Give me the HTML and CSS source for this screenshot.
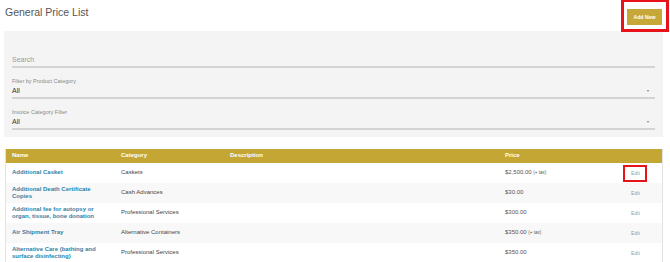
FILE: index.html
```html
<!DOCTYPE html>
<html>
<head>
<meta charset="utf-8">
<link rel="stylesheet" href="styles.css">
</head>
<body>
<div class="top">
  <h1 class="title">General Price List</h1>
  <button class="add-btn">Add New</button>
</div>
<div class="panel">
  <div class="field">
    <div class="label"></div>
    <div class="value placeholder">Search</div>
  </div>
  <div class="field">
    <div class="label">Filter by Product Category</div>
    <div class="value">All<span class="caret"></span></div>
  </div>
  <div class="field">
    <div class="label">Invoice Category Filter</div>
    <div class="value">All<span class="caret"></span></div>
  </div>
</div>
<div class="table">
  <div class="row head">
    <div class="c">Name</div>
    <div class="c">Category</div>
    <div class="c">Description</div>
    <div class="c">Price</div>
    <div class="c"></div>
  </div>
  <div class="row">
    <div class="c name">Additional Casket</div>
    <div class="c cat">Caskets</div>
    <div class="c"></div>
    <div class="c price">$2,500.00 <span class="tax">(+ tax)</span></div>
    <div class="c edit"><span class="flag">Edit</span></div>
  </div>
  <div class="row alt">
    <div class="c name">Additional Death Certificate Copies</div>
    <div class="c cat">Cash Advances</div>
    <div class="c"></div>
    <div class="c price">$30.00</div>
    <div class="c edit"><span>Edit</span></div>
  </div>
  <div class="row">
    <div class="c name">Additional fee for autopsy or organ, tissue, bone donation</div>
    <div class="c cat">Professional Services</div>
    <div class="c"></div>
    <div class="c price">$300.00</div>
    <div class="c edit"><span>Edit</span></div>
  </div>
  <div class="row alt">
    <div class="c name">Air Shipment Tray</div>
    <div class="c cat">Alternative Containers</div>
    <div class="c"></div>
    <div class="c price">$350.00 <span class="tax">(+ tax)</span></div>
    <div class="c edit"><span>Edit</span></div>
  </div>
  <div class="row">
    <div class="c name">Alternative Care (bathing and surface disinfecting)</div>
    <div class="c cat">Professional Services</div>
    <div class="c"></div>
    <div class="c price">$350.00</div>
    <div class="c edit"><span>Edit</span></div>
  </div>
</div>
</body>
</html>
```
FILE: styles.css
```css
html, body {
  margin: 0;
  padding: 0;
  background: #ffffff;
  font-family: "Liberation Sans", Arial, sans-serif;
  overflow: hidden;
}

.top {
  height: 31px;
  display: flex;
  justify-content: space-between;
  align-items: flex-start;
  padding: 0 8px 0 5px;
}

.title {
  margin: 0;
  padding-top: 6px;
  font-size: 10.5px;
  line-height: 13px;
  font-weight: normal;
  color: #555555;
}

.add-btn {
  position: relative;
  margin-top: 9px;
  width: 35px;
  height: 16px;
  padding: 0;
  border: none;
  background: #c6a737;
  color: #ffffff;
  font-family: "Liberation Sans", Arial, sans-serif;
  font-weight: bold;
  font-size: 5.2px;
  line-height: 16px;
  text-align: center;
}

.add-btn::after {
  content: "";
  position: absolute;
  top: -10px;
  bottom: -7px;
  left: -6px;
  right: -7px;
  border: 3px solid #e8121b;
}

.panel {
  margin: 0 7px 0 4px;
  background: #f4f4f4;
  padding: 15px 8px 7px 8px;
  display: flex;
  flex-direction: column;
  gap: 9px;
}

.field {
  display: flex;
  flex-direction: column;
  border-bottom: 2px solid #d3d3d3;
}

.label {
  height: 8px;
  font-size: 5.5px;
  line-height: 8px;
  color: #888888;
}

.value {
  position: relative;
  height: 12px;
  font-size: 7px;
  line-height: 12px;
  color: #333333;
}

.value.placeholder {
  color: #9a9a9a;
}

.caret {
  position: absolute;
  right: 6px;
  top: 5px;
  width: 0;
  height: 0;
  border-left: 1.5px solid transparent;
  border-right: 1.5px solid transparent;
  border-top: 2px solid #777777;
}

.table {
  margin: 12px 7px 0 5px;
  border: 1px solid #e2e2e2;
  border-top: none;
}

.row {
  display: grid;
  grid-template-columns: 109px 109px 275px 125px 1fr;
  height: 20px;
  align-items: center;
}

.row.head {
  height: 14px;
  background: #c4a634;
}

.row.alt {
  background: #f8f8f8;
}

.c {
  padding-left: 6px;
  font-size: 6px;
  line-height: 7.5px;
}

.head .c {
  color: #ffffff;
  font-weight: bold;
  font-size: 6px;
}

.name {
  color: #2f82a9;
  font-weight: bold;
  padding-right: 4px;
}

.cat {
  color: #444444;
}

.price {
  color: #555555;
}

.tax {
  font-size: 4.5px;
}

.edit {
  padding-left: 7px;
  color: #7fa7bf;
  font-size: 5.2px;
}

.edit span {
  display: inline-block;
  line-height: 8px;
}

.flag {
  position: relative;
}

.flag::after {
  content: "";
  position: absolute;
  top: -4px;
  bottom: -5px;
  left: -8px;
  right: -7px;
  border: 2px solid #e8121b;
}
```
